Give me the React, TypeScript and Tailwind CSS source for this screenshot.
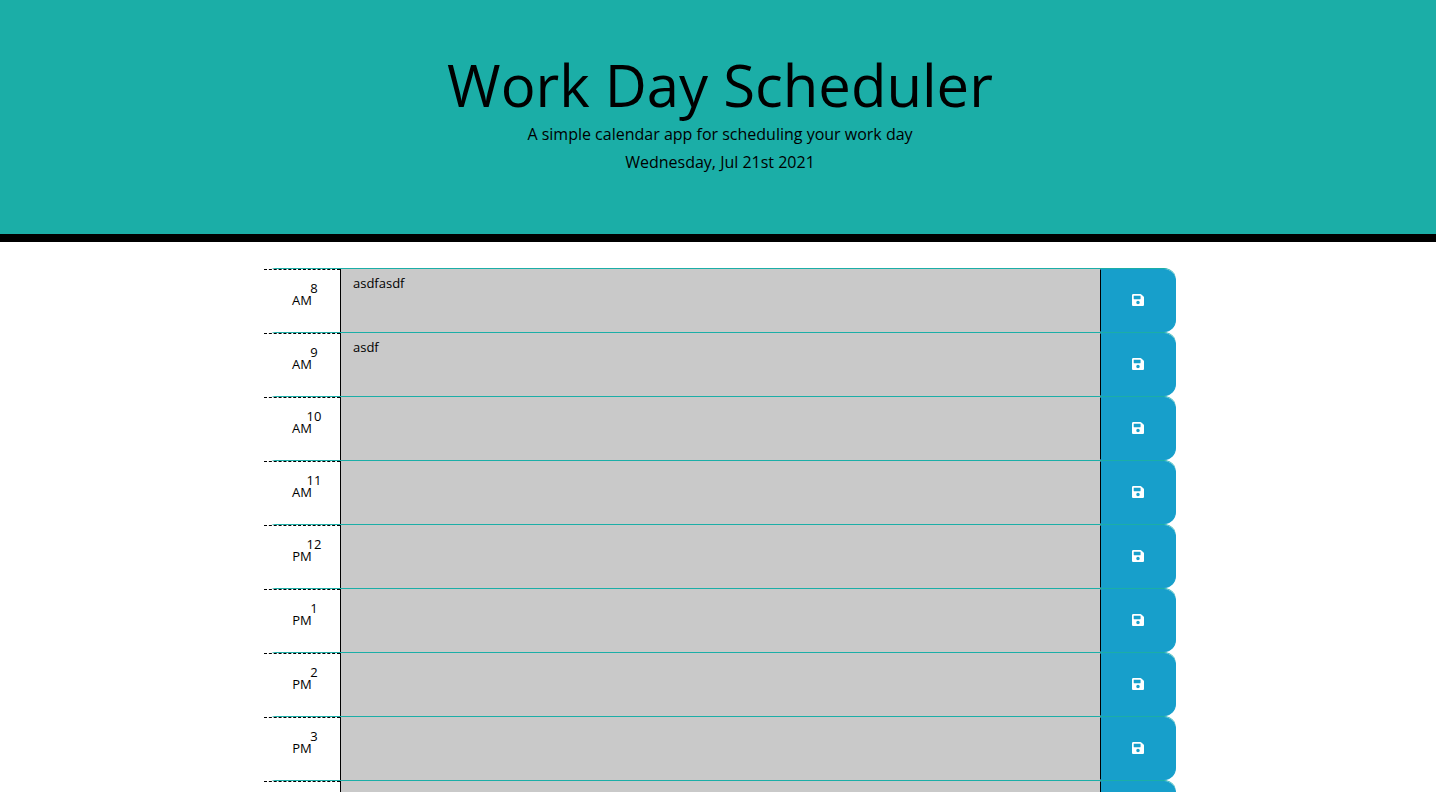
import { useState } from "react";

type Block = { hour: string; period: "AM" | "PM"; text: string };

const initialBlocks: Block[] = [
  { hour: "8", period: "AM", text: "asdfasdf" },
  { hour: "9", period: "AM", text: "asdf" },
  { hour: "10", period: "AM", text: "" },
  { hour: "11", period: "AM", text: "" },
  { hour: "12", period: "PM", text: "" },
  { hour: "1", period: "PM", text: "" },
  { hour: "2", period: "PM", text: "" },
  { hour: "3", period: "PM", text: "" },
  { hour: "4", period: "PM", text: "" },
];

function SaveIcon() {
  return (
    <svg viewBox="0 0 448 512" className="h-[14px] w-3" fill="currentColor" aria-hidden="true">
      <path d="M433.941 129.941l-83.882-83.882A48 48 0 0 0 316.118 32H48C21.49 32 0 53.49 0 80v352c0 26.51 21.49 48 48 48h352c26.51 0 48-21.49 48-48V163.882a48 48 0 0 0-14.059-33.941zM224 416c-35.346 0-64-28.654-64-64 0-35.346 28.654-64 64-64s64 28.654 64 64c0 35.346-28.654 64-64 64zm96-304.52V212c0 6.627-5.373 12-12 12H76c-6.627 0-12-5.373-12-12V108c0-6.627 5.373-12 12-12h228.52c3.183 0 6.235 1.264 8.485 3.515l3.48 3.48A11.996 11.996 0 0 1 320 111.48z" />
    </svg>
  );
}

function TimeBlock({ block, onChange }: { block: Block; onChange: (text: string) => void }) {
  const id = `hour-${block.hour}`;
  return (
    <div className="grid h-16 grid-cols-12 rounded-xl border-t border-[#1baea7]">
      <label
        htmlFor={id}
        className="flex flex-col items-center border-t border-dashed border-black bg-white pt-3 text-[13px] leading-3"
      >
        <span className="pl-6">{block.hour}</span>
        <span>{block.period}</span>
      </label>
      <textarea
        id={id}
        value={block.text}
        onChange={(e) => onChange(e.target.value)}
        className="col-span-10 resize-none border-l border-black bg-[#c9c9c9] px-3 py-[5px] text-[13px] leading-[18px] outline-none"
      />
      <button
        type="button"
        aria-label={`Save ${block.hour} ${block.period}`}
        className="flex items-center justify-center rounded-r-xl border border-[#179fcb] border-l-black bg-[#179fcb] pb-0.5 text-white hover:bg-[#1490b8]"
      >
        <SaveIcon />
      </button>
    </div>
  );
}

export default function App() {
  const [blocks, setBlocks] = useState(initialBlocks);
  return (
    <div className="h-screen overflow-y-auto bg-white font-['Open_Sans',sans-serif] text-black [scrollbar-width:none]">
      <header className="border-b-8 border-black bg-[#1baea7] pt-[50px] pb-[58px] pl-1 text-center">
        <h1 className="text-[58px] leading-[70px]">Work Day Scheduler</h1>
        <p className="text-base leading-7">A simple calendar app for scheduling your work day</p>
        <p className="text-base leading-7">Wednesday, Jul 21st 2021</p>
      </header>
      <main className="pt-[26px] pl-1">
        <div className="mx-auto max-w-[912px]">
          {blocks.map((block, i) => (
            <TimeBlock
              key={block.hour}
              block={block}
              onChange={(text) => setBlocks(blocks.map((b, j) => (j === i ? { ...b, text } : b)))}
            />
          ))}
        </div>
      </main>
    </div>
  );
}
